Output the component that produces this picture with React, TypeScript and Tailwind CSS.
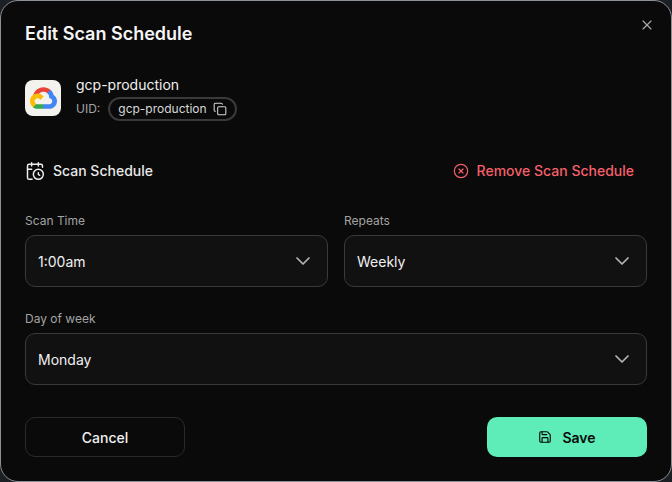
import { ChevronDown, Copy, X, CircleX, CalendarClock, Save } from "lucide-react";

function Field({ label, value, className = "" }: { label: string; value: string; className?: string }) {
  return (
    <div className={`flex min-w-0 flex-col gap-[6px] ${className}`}>
      <span className="text-[12px] leading-[16px] text-[#a3a3a3]">{label}</span>
      <div className="flex h-[52px] items-center justify-between rounded-[10px] border border-[#3a3a3c] bg-[#111112] pl-3 pr-3">
        <span className="text-[14px] text-[#f0f0f0]">{value}</span>
        <ChevronDown className="h-6 w-6 text-[#b4b4b4]" strokeWidth={1.75} />
      </div>
    </div>
  );
}

export default function App() {
  return (
    <div className="h-[482px] w-[672px] overflow-hidden bg-[#1c2024] font-['Inter',sans-serif]">
      <div className="relative flex h-[482px] w-[672px] flex-col rounded-[18px] border border-[#8b9097] bg-[#0a0a0a] px-6 pt-[22px] text-white">
        <button className="absolute right-[16px] top-[16px] text-[#a8a8a8]">
          <X className="h-4 w-4" strokeWidth={1.75} />
        </button>
        <h2 className="text-[18px] font-semibold leading-[22px] text-[#f5f5f5]">Edit Scan Schedule</h2>

        <div className="mt-[35px] flex h-9 items-center gap-[15px]">
          <div className="flex h-9 w-9 items-center justify-center rounded-lg bg-[#f4f2ec]">
            <svg viewBox="0 0 256 206" className="h-[22px] w-[27px]">
              <path d="M170.252 56.819l22.253-22.253 1.483-9.37C153.437-11.677 88.976-7.496 52.42 33.92 42.267 45.423 34.734 59.764 30.717 74.573l7.97-1.123 44.505-7.34 3.436-3.513c19.797-21.742 53.27-24.667 76.128-6.168l7.496.39z" fill="#EA4335" />
              <path d="M224.205 73.918c-5.115-18.836-15.616-35.769-30.217-48.722l-31.232 31.232a55.515 55.515 0 0 1 20.379 44.037v5.544c15.351 0 27.797 12.445 27.797 27.796 0 15.352-12.446 27.485-27.797 27.485h-55.671l-5.466 5.934v33.34l5.466 5.231h55.67c39.93.311 72.553-31.494 72.864-71.424a72.303 72.303 0 0 0-31.793-59.453" fill="#4285F4" />
              <path d="M71.87 205.796h55.593V161.29H71.87a27.275 27.275 0 0 1-11.399-2.498l-7.887 2.42-22.409 22.253-1.952 7.574c12.567 9.489 27.9 15.017 43.647 14.757z" fill="#34A853" />
              <path d="M71.87 61.425C31.94 61.664-.237 94.228.001 134.159c.134 22.298 10.547 43.288 28.222 56.886l32.248-32.248c-13.991-6.321-20.208-22.786-13.887-36.776 6.32-13.99 22.786-20.207 36.775-13.887a27.796 27.796 0 0 1 13.887 13.887l32.248-32.248A72.305 72.305 0 0 0 71.87 61.425" fill="#FBBC05" />
            </svg>
          </div>
          <div className="flex flex-col gap-1 pt-[2px]">
            <span className="text-[14px] leading-[16px] text-[#f0f0f0]">gcp-production</span>
            <div className="flex items-center gap-2">
              <span className="text-[12px] leading-4 text-[#a3a3a3]">UID:</span>
              <span className="flex h-6 items-center gap-[6px] rounded-full border-2 border-[#3a3a3c] pl-2 pr-2 text-[12px] text-[#d8d8d8]">
                gcp-production
                <Copy className="h-[14px] w-[14px]" strokeWidth={1.75} />
              </span>
            </div>
          </div>
        </div>

        <div className="mt-[44px] flex items-center justify-between pr-[13px]">
          <div className="flex items-center gap-2">
            <CalendarClock className="h-5 w-5 text-[#f0f0f0]" strokeWidth={1.75} />
            <span className="text-[14px] font-medium text-[#e8e8e8]">Scan Schedule</span>
          </div>
          <div className="flex items-center gap-2 text-[#f5606a]">
            <CircleX className="h-4 w-4" strokeWidth={1.75} />
            <span className="text-[14px] font-medium">Remove Scan Schedule</span>
          </div>
        </div>

        <div className="mt-[32px] grid grid-cols-2 gap-4">
          <Field label="Scan Time" value="1:00am" />
          <Field label="Repeats" value="Weekly" />
        </div>
        <Field label="Day of week" value="Monday" className="mt-[24px]" />

        <div className="mt-8 flex justify-between">
          <button className="h-10 w-40 rounded-[10px] border border-[#2a2a2c] text-[14px] font-medium text-[#f0f0f0]">Cancel</button>
          <button className="flex h-10 w-40 items-center justify-center gap-[10px] rounded-[10px] bg-[#5eecb8] text-[14px] font-semibold text-[#0a0a0a]">
            <Save className="h-[14px] w-[14px]" strokeWidth={2} />
            Save
          </button>
        </div>
      </div>
    </div>
  );
}
